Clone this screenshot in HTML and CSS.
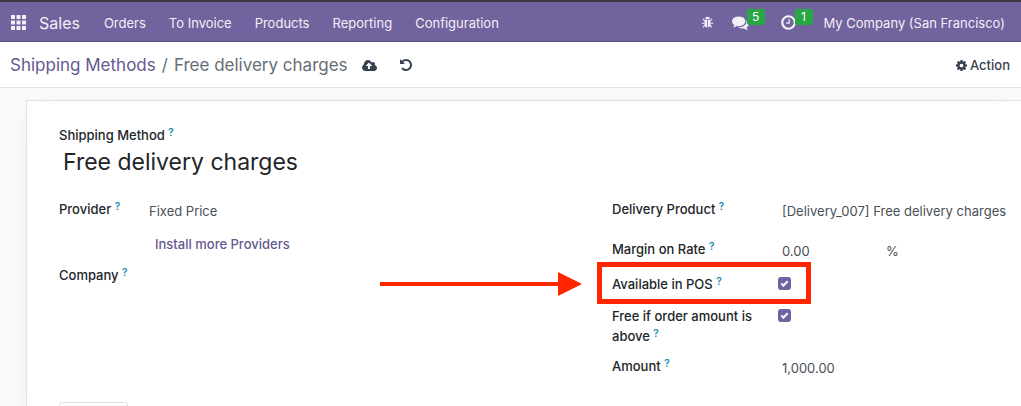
FILE: index.html
```html
<!DOCTYPE html>
<html lang="en">
<head>
<meta charset="utf-8">
<title>Free delivery charges - Shipping Methods</title>
<link rel="stylesheet" href="styles.css">
</head>
<body>
<header class="navbar">
  <button class="apps" type="button" aria-label="Apps">
    <svg class="apps-icon" viewBox="0 0 15 15"><path d="M0 0h4v4H0zM5.500 0h4v4h-4zM11 0h4v4h-4zM0 5.500h4v4H0zM5.500 5.500h4v4h-4zM11 5.500h4v4h-4zM0 11h4v4H0zM5.500 11h4v4h-4zM11 11h4v4h-4z"/></svg>
  </button>
  <a class="brand" href="#">Sales</a>
  <nav class="menu">
    <a href="#">Orders</a>
    <a href="#">To Invoice</a>
    <a href="#">Products</a>
    <a href="#">Reporting</a>
    <a href="#">Configuration</a>
  </nav>
  <div class="systray">
    <button type="button" aria-label="Debug">
      <svg class="icon-bug" viewBox="0 0 24 24"><path d="M7.500 6a4.500 4.500 0 0 1 9 0z"/><path d="M6.500 7.500h4.800V21C8.300 20.800 6.500 18.500 6.500 15zM12.700 7.500h4.800V15c0 3.500-1.800 5.800-4.800 6z"/><path class="legs" d="M3.500 5.500l3.500 3.500M20.500 5.500L17 9M1.500 13.500h5M22.500 13.500h-5M3.500 21l4-4M20.500 21l-4-4"/></svg>
    </button>
    <button class="messages" type="button" aria-label="Messages">
      <svg class="icon-chat" viewBox="0 0 1792 1792"><path d="M1408 768q0 139-94 257t-256.500 186.500-353.500 68.500q-86 0-176-16-124 88-278 128-36 9-86 16h-3q-11 0-20.500-8t-11.500-21q-1-3-1-6.500t.5-6.500 2-6l2.500-5 3.500-5.500 4-5 4.500-5 4-4.500q5-6 23-25t26-29.500 22.500-29 25-38.500 20.500-44q-124-72-195-177t-71-224q0-139 94-257t256.500-186.500 353.500-68.500 353.500 68.500 256.500 186.500 94 257zm384 256q0 120-71 224.500t-195 176.500q10 24 20.500 44t25 38.500 22.500 29 26 29.500 23 25q1 1 4 4.500t4.500 5 4 5 3.500 5.500l2.500 5 2 6 .5 6.500-1 6.500q-3 14-13 22t-22 7q-50-7-86-16-154-40-278-128-90 16-176 16-271 0-472-132 58 4 88 4 161 0 309-45t264-129q125-92 192-212t67-254q0-77-23-152 129 71 204 178t75 230z"/></svg>
      <span class="badge">5</span>
    </button>
    <button class="activities" type="button" aria-label="Activities">
      <svg class="icon-chat" viewBox="0 0 1792 1792"><path d="M1024 544v448q0 14-9 23t-23 9h-320q-14 0-23-9t-9-23v-64q0-14 9-23t23-9h224v-352q0-14 9-23t23-9h64q14 0 23 9t9 23zm416 352q0-148-73-273t-198-198-273-73-273 73-198 198-73 273 73 273 198 198 273 73 273-73 198-198 73-273zm224 0q0 209-103 385.500t-279.500 279.500-385.500 103-385.500-103-279.500-279.500-103-385.500 103-385.500 279.500-279.500 385.500-103 385.500 103 279.500 279.500 103 385.500z"/></svg>
      <span class="badge">1</span>
    </button>
    <button class="company" type="button">My Company (San Francisco)</button>
  </div>
</header>

<div class="control-panel">
  <nav class="breadcrumb"><a href="#">Shipping Methods</a><span class="sep">/</span><span>Free delivery charges</span></nav>
  <button class="save" type="button" aria-label="Save">
    <svg class="icon-cloud" viewBox="-64 128 1920 1408"><path d="M1216 864q0-14-9-23l-352-352q-9-9-23-9t-23 9l-351 351q-10 12-10 24 0 14 9 23t23 9h224v352q0 13 9.500 22.500t22.500 9.500h192q13 0 22.500-9.500t9.500-22.500v-352h224q13 0 22.500-9.500t9.500-22.500zm640 288q0 159-112.500 271.500t-271.500 112.500h-1088q-185 0-316.500-131.500t-131.500-316.500q0-130 70-240t188-165q-2-30-2-43 0-212 150-362t362-150q156 0 285.500 87t188.500 231q71-62 166-62 106 0 181 75t75 181q0 76-41 138 130 31 213.500 135.500t83.500 238.500z"/></svg>
  </button>
  <button class="discard" type="button" aria-label="Discard">
    <svg class="icon-undo" viewBox="0 0 1792 1792"><path d="M1664 896q0 156-61 298t-164 245-245 164-298 61q-172 0-327-72.500t-264-204.500q-7-10-6.500-22.500t8.500-20.500l137-138q10-9 25-9 16 2 23 12 73 95 179 147t225 52q104 0 198.500-40.500t163.500-109.500 109.500-163.500 40.500-198.500-40.500-198.500-109.500-163.500-163.500-109.500-198.500-40.500q-98 0-188 35.500t-160 101.500l137 138q31 30 14 69-17 40-59 40h-448q-26 0-45-19t-19-45v-448q0-42 40-59 39-17 69 14l130 129q107-101 244.500-156.500t284.500-55.500q156 0 298 61t245 164 164 245 61 298z"/></svg>
  </button>
  <button class="action" type="button">
    <svg class="icon-cog" viewBox="0 0 1792 1792"><path d="M1152 896q0-106-75-181t-181-75-181 75-75 181 75 181 181 75 181-75 75-181zm512-109v222q0 12-8 23t-20 13l-185 28q-19 54-39 91 35 50 107 138 10 12 10 25t-9 23q-27 37-99 108t-94 71q-12 0-26-9l-138-108q-44 23-91 38-16 136-29 186-7 28-36 28h-222q-14 0-24.500-8.500t-11.500-21.500l-28-184q-49-16-90-37l-141 107q-10 9-25 9-14 0-25-11-126-114-165-168-7-10-7-23 0-12 8-23 15-21 51-66.500t54-70.500q-27-50-41-99l-183-27q-13-2-21-12.500t-8-23.500v-222q0-12 8-23t19-13l186-28q14-46 39-92-40-57-107-138-10-12-10-24 0-10 9-23 26-36 98.500-107.500t94.500-71.500q13 0 26 10l138 107q44-23 91-38 16-136 29-186 7-28 36-28h222q14 0 24.500 8.500t11.500 21.500l28 184q49 16 90 37l142-107q9-9 24-9 13 0 25 10 129 119 165 170 7 8 7 22 0 12-8 23-15 21-51 66.500t-54 70.500q26 50 41 98l183 28q13 2 21 12.500t8 23.500z"/></svg>
    Action
  </button>
</div>

<main class="content">
  <form class="sheet">
    <label class="label" for="name">Shipping Method <sup>?</sup></label>
    <input class="title" id="name" type="text" value="Free delivery charges">

    <div class="groups">
      <div class="group group-left">
        <div class="row row-tall">
          <label class="label" for="provider">Provider <sup>?</sup></label>
          <select class="value" id="provider"><option>Fixed Price</option></select>
        </div>
        <div class="row row-link">
          <a class="install" href="#">Install more Providers</a>
        </div>
        <div class="row">
          <label class="label" for="company">Company <sup>?</sup></label>
          <input class="value" id="company" type="text">
        </div>
      </div>

      <div class="group group-right">
        <div class="row row-tall">
          <label class="label" for="product">Delivery Product <sup>?</sup></label>
          <input class="value" id="product" type="text" value="[Delivery_007] Free delivery charges">
        </div>
        <div class="row row-margin">
          <label class="label" for="margin">Margin on Rate <sup>?</sup></label>
          <div class="percent"><input class="value" id="margin" type="text" value="0.00"><span>%</span></div>
        </div>
        <div class="row row-check highlighted">
          <label class="label" for="pos">Available in POS <sup>?</sup></label>
          <input class="check" id="pos" type="checkbox" checked>
          <svg class="arrow" viewBox="0 0 203 26"><path d="M0 11h178V1l24 12-24 12V15H0z"/></svg>
        </div>
        <div class="row row-free">
          <label class="label" for="free">Free if order amount is above <sup>?</sup></label>
          <input class="check" id="free" type="checkbox" checked>
        </div>
        <div class="row">
          <label class="label" for="amount">Amount <sup>?</sup></label>
          <input class="value" id="amount" type="text" value="1,000.00">
        </div>
      </div>
    </div>
    <div class="tab"></div>
  </form>
</main>
</body>
</html>
```
FILE: styles.css
```css
*,
*::before,
*::after {
  box-sizing: border-box;
}

body {
  margin: 0;
  height: 100vh;
  display: flex;
  flex-direction: column;
  overflow: hidden;
  background: #f8f9fa;
  color: #212529;
  font: 13px/20px Inter, "Liberation Sans", sans-serif;
}

a {
  color: inherit;
  text-decoration: none;
}

button,
input,
select {
  margin: 0;
  padding: 0;
  border: 0;
  background: none;
  color: inherit;
  font: inherit;
}

svg {
  display: block;
  fill: currentColor;
}

.navbar {
  flex: none;
  height: 42px;
  display: flex;
  align-items: center;
  padding: 2px 16px 0 11px;
  border-top: 2px solid #3c3a3e;
  border-bottom: 1px solid #5a4f7f;
  background: #71639e;
  color: #f2f0f6;
}

.apps-icon {
  width: 15px;
  height: 15px;
}

.brand {
  margin-left: 13px;
  font-size: 16px;
}

.menu {
  display: flex;
  gap: 23px;
  margin-left: 24px;
}

.systray {
  display: flex;
  align-items: center;
  margin-left: auto;
}

.systray button {
  position: relative;
}

.icon-bug {
  width: 13px;
  height: 13px;
}

.legs {
  fill: none;
  stroke: currentColor;
  stroke-width: 2;
}

.icon-chat {
  width: 17px;
  height: 17px;
}

.messages {
  margin-left: 18px;
}

.activities {
  margin-left: 31px;
}

.company {
  margin-left: 27px;
}

.badge {
  position: absolute;
  left: 15px;
  top: -5px;
  width: 18px;
  height: 16px;
  border-radius: 2px;
  background: #28a745;
  color: #fff;
  font-size: 12px;
  line-height: 16px;
}

.control-panel {
  flex: none;
  height: 46px;
  display: flex;
  align-items: center;
  padding: 1px 11px 0 10px;
  border-bottom: 1px solid #dee2e6;
  background: #fff;
  color: #374151;
}

.breadcrumb {
  color: #666e75;
  font-size: 17px;
}

.breadcrumb a {
  color: #65588f;
}

.sep {
  margin: 0 6px;
}

.save {
  margin-left: 14px;
}

.icon-cloud {
  width: 15px;
  height: 11px;
}

.discard {
  margin-left: 22px;
}

.icon-undo {
  width: 14px;
  height: 14px;
}

.action {
  display: flex;
  align-items: center;
  gap: 2px;
  margin-left: auto;
  font-weight: 500;
}

.icon-cog {
  width: 13px;
  height: 13px;
}

.content {
  flex: 1;
  padding: 12px 0 0 26px;
}

.sheet {
  min-height: 100%;
  padding: 24px 0 0 32px;
  border: solid #dee2e6;
  border-width: 1px 0 0 1px;
  background: #fff;
  box-shadow: 0 5px 20px -15px rgba(0, 0, 0, 0.4);
}

.label {
  font-weight: 500;
}

.label sup {
  color: #1489ad;
  font-size: 10px;
  font-weight: 600;
  line-height: 0;
  vertical-align: 4px;
}

.title {
  display: block;
  width: 100%;
  height: 34px;
  padding-left: 4px;
  font-size: 23px;
}

.groups {
  display: grid;
  grid-template-columns: 553fr 409fr;
  margin-top: 20px;
}

.row {
  display: grid;
  align-items: start;
}

.group-left .row {
  grid-template-columns: 90px 1fr;
}

.group-right .row {
  grid-template-columns: 170px 1fr;
}

.value {
  appearance: none;
  width: 100%;
  height: 20px;
  margin-top: 2px;
  color: #495057;
}

.row-tall {
  height: 40px;
}

.group-left .row-tall,
.row-margin {
  height: 35px;
}

.install {
  grid-column: 2;
  padding-left: 6px;
  color: #65588f;
  font-weight: 500;
}

.row-link {
  height: 31px;
}

.percent {
  display: grid;
  grid-template-columns: 104px 1fr;
  color: #495057;
}

.percent span {
  margin-top: 2px;
}

.row-check {
  height: 32px;
}

.row-free {
  height: 50px;
}

.row-free .label {
  padding-right: 20px;
}

.check {
  appearance: none;
  width: 13px;
  height: 13px;
  margin: 3px 0 0 -4px;
  border-radius: 3px;
  background: #71639e;
  display: grid;
  place-items: center;
}

.check::after {
  content: "";
  width: 7px;
  height: 4px;
  border: solid #fff;
  border-width: 0 0 2px 2px;
  transform: translateY(-1px) rotate(-45deg);
}

.highlighted {
  position: relative;
}

.highlighted::before {
  content: "";
  position: absolute;
  left: -15px;
  top: -12px;
  width: 214px;
  height: 42px;
  border: 5px solid #ff2600;
}

.arrow {
  position: absolute;
  right: calc(100% + 29px);
  top: -3px;
  width: 203px;
  height: 26px;
  fill: #ff2600;
}

.tab {
  width: 69px;
  height: 20px;
  margin-top: 24px;
  border: 1px solid #dee2e6;
  border-radius: 3px 3px 0 0;
}
```
